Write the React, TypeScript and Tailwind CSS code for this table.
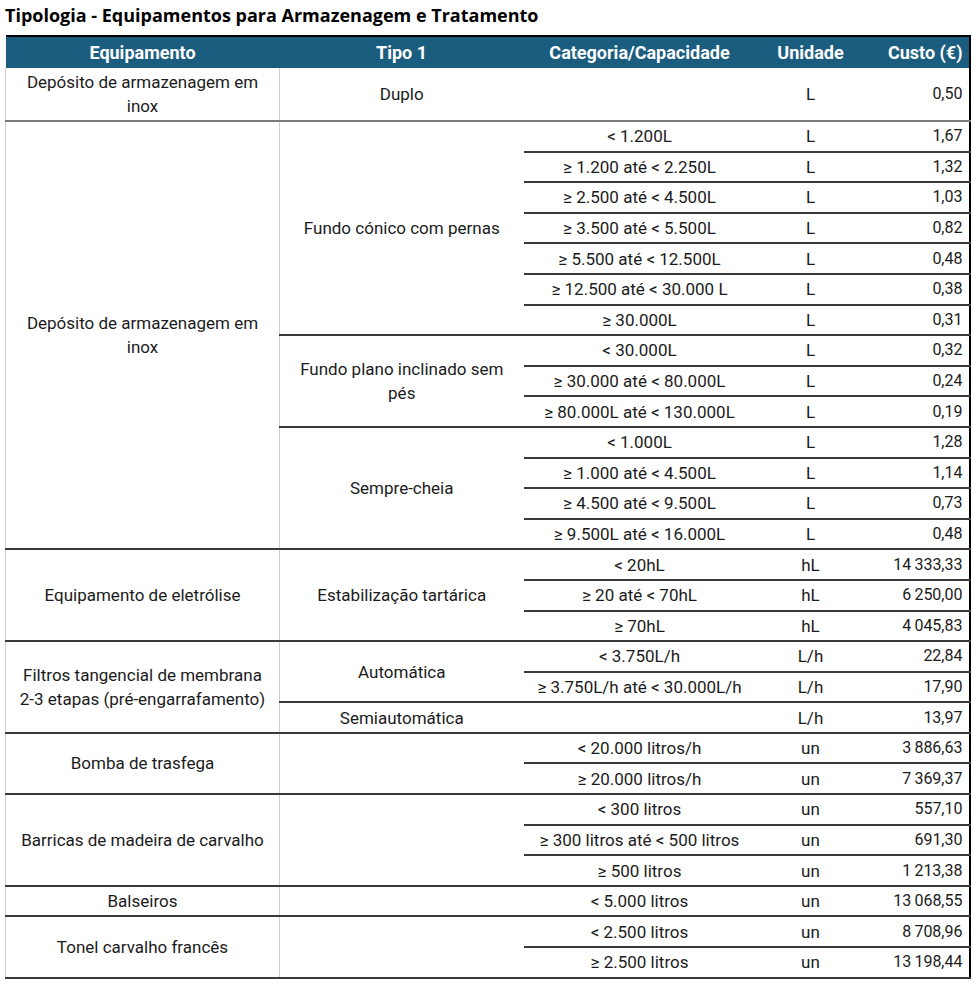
import React from "react";

type Item = [string, string, string];

interface Sub {
  tipo: string[];
  items: Item[];
}

interface Group {
  equip: string[];
  subs: Sub[];
  tall?: boolean;
  lineColor: string;
}

// costs use a thin space as thousands separator, like the sheet does
const groups: Group[] = [
  {
    equip: ["Depósito de armazenagem em", "inox"],
    subs: [{ tipo: ["Duplo"], items: [["", "L", "0,50"]] }],
    tall: true,
    lineColor: "gray",
  },
  {
    equip: ["Depósito de armazenagem em", "inox"],
    subs: [
      {
        tipo: ["Fundo cónico com pernas"],
        items: [
          ["< 1.200L", "L", "1,67"],
          ["≥ 1.200 até < 2.250L", "L", "1,32"],
          ["≥ 2.500 até < 4.500L", "L", "1,03"],
          ["≥ 3.500 até < 5.500L", "L", "0,82"],
          ["≥ 5.500 até < 12.500L", "L", "0,48"],
          ["≥ 12.500 até < 30.000 L", "L", "0,38"],
          ["≥ 30.000L", "L", "0,31"],
        ],
      },
      {
        tipo: ["Fundo plano inclinado sem", "pés"],
        items: [
          ["< 30.000L", "L", "0,32"],
          ["≥ 30.000 até < 80.000L", "L", "0,24"],
          ["≥ 80.000L até < 130.000L", "L", "0,19"],
        ],
      },
      {
        tipo: ["Sempre-cheia"],
        items: [
          ["< 1.000L", "L", "1,28"],
          ["≥ 1.000 até < 4.500L", "L", "1,14"],
          ["≥ 4.500 até < 9.500L", "L", "0,73"],
          ["≥ 9.500L até < 16.000L", "L", "0,48"],
        ],
      },
    ],
    lineColor: "dark",
  },
  {
    equip: ["Equipamento de eletrólise"],
    subs: [
      {
        tipo: ["Estabilização tartárica"],
        items: [
          ["< 20hL", "hL", "14\u2009333,33"],
          ["≥ 20 até < 70hL", "hL", "6\u2009250,00"],
          ["≥ 70hL", "hL", "4\u2009045,83"],
        ],
      },
    ],
    lineColor: "dark",
  },
  {
    equip: ["Filtros tangencial de membrana", "2-3 etapas (pré-engarrafamento)"],
    subs: [
      {
        tipo: ["Automática"],
        items: [
          ["< 3.750L/h", "L/h", "22,84"],
          ["≥ 3.750L/h até < 30.000L/h", "L/h", "17,90"],
        ],
      },
      { tipo: ["Semiautomática"], items: [["", "L/h", "13,97"]] },
    ],
    lineColor: "dark",
  },
  {
    equip: ["Bomba de trasfega"],
    subs: [
      {
        tipo: [],
        items: [
          ["< 20.000 litros/h", "un", "3\u2009886,63"],
          ["≥ 20.000 litros/h", "un", "7\u2009369,37"],
        ],
      },
    ],
    lineColor: "dark",
  },
  {
    equip: ["Barricas de madeira de carvalho"],
    subs: [
      {
        tipo: [],
        items: [
          ["< 300 litros", "un", "557,10"],
          ["≥ 300 litros até < 500 litros", "un", "691,30"],
          ["≥ 500 litros", "un", "1\u2009213,38"],
        ],
      },
    ],
    lineColor: "dark",
  },
  {
    equip: ["Balseiros"],
    subs: [{ tipo: [], items: [["< 5.000 litros", "un", "13\u2009068,55"]] }],
    lineColor: "dark",
  },
  {
    equip: ["Tonel carvalho francês"],
    subs: [
      {
        tipo: [],
        items: [
          ["< 2.500 litros", "un", "8\u2009708,96"],
          ["≥ 2.500 litros", "un", "13\u2009198,44"],
        ],
      },
    ],
    lineColor: "dark",
  },
];

const Lines = ({ lines }: { lines: string[] }) => (
  <>
    {lines.map((l, i) => (
      <span key={i} className="block whitespace-nowrap">
        {l}
      </span>
    ))}
  </>
);

const innerLine = "border-b-2 border-b-[#3a3a3a]";

const App = () => {
  return (
    <div
      className="w-[974px] h-[991px] bg-white text-[#1b1b1b]"
      style={{ fontFamily: "Roboto, 'Noto Sans', sans-serif" }}
    >
      <div
        className="h-[35px] pl-[5px] pt-[3px] text-[18px] font-bold text-black leading-[24px]"
        style={{ fontFamily: "'Open Sans', 'Noto Sans', sans-serif" }}
      >
        Tipologia - Equipamentos para Armazenagem e Tratamento
      </div>
      <table className="ml-[5px] w-[964px] table-fixed border-collapse text-[17px] leading-[24px]">
        <colgroup>
          <col className="w-[274px]" />
          <col className="w-[244px]" />
          <col className="w-[232px]" />
          <col className="w-[110px]" />
          <col className="w-[104px]" />
        </colgroup>
        <thead>
          <tr className="h-[32px] bg-[#1b5d7f] text-white text-[18px] border-t-2 border-t-black border-r-2 border-r-black">
            <th className="text-center font-bold">Equipamento</th>
            <th className="text-center font-bold">Tipo 1</th>
            <th className="text-center font-bold">Categoria/Capacidade</th>
            <th className="text-center font-bold">Unidade</th>
            <th className="text-right pr-[6px] font-bold">Custo (€)</th>
          </tr>
        </thead>
        <tbody className="border-l border-l-[#d0d0d0] border-r-2 border-r-black border-b-2 border-b-[#222]">
          {groups.map((g, gi) => {
            const total = g.subs.reduce((n, s) => n + s.items.length, 0);
            const groupLine =
              g.lineColor === "gray" ? "border-b-2 border-b-[#7a7a7a]" : innerLine;
            const rowH = g.tall ? "h-[53px]" : "h-[30.6px]";
            let rowIndex = 0;
            return g.subs.flatMap((s, si) =>
              s.items.map((it, ii) => {
                const first = rowIndex === 0;
                rowIndex++;
                const lastInGroup = rowIndex === total;
                const lastInSub = ii === s.items.length - 1;
                const line = lastInGroup ? groupLine : innerLine;
                return (
                  <tr key={`${gi}-${si}-${ii}`} className={rowH}>
                    {first && (
                      <td
                        rowSpan={total}
                        className={`text-center align-middle px-1 border-r border-r-[#cfcfcf] ${groupLine}`}
                      >
                        <Lines lines={g.equip} />
                      </td>
                    )}
                    {ii === 0 && (
                      <td
                        rowSpan={s.items.length}
                        className={`text-center align-middle px-1 ${
                          lastInSub && si === g.subs.length - 1 ? groupLine : innerLine
                        }`}
                      >
                        <Lines lines={s.tipo} />
                      </td>
                    )}
                    <td className={`text-center align-middle p-0 whitespace-nowrap ${line}`}>{it[0]}</td>
                    <td className={`text-center align-middle p-0 ${line}`}>{it[1]}</td>
                    <td className={`text-right align-middle p-0 pr-[6px] text-[16px] whitespace-nowrap ${line}`}>
                      {it[2]}
                    </td>
                  </tr>
                );
              })
            );
          })}
        </tbody>
      </table>
    </div>
  );
};

export default App;
